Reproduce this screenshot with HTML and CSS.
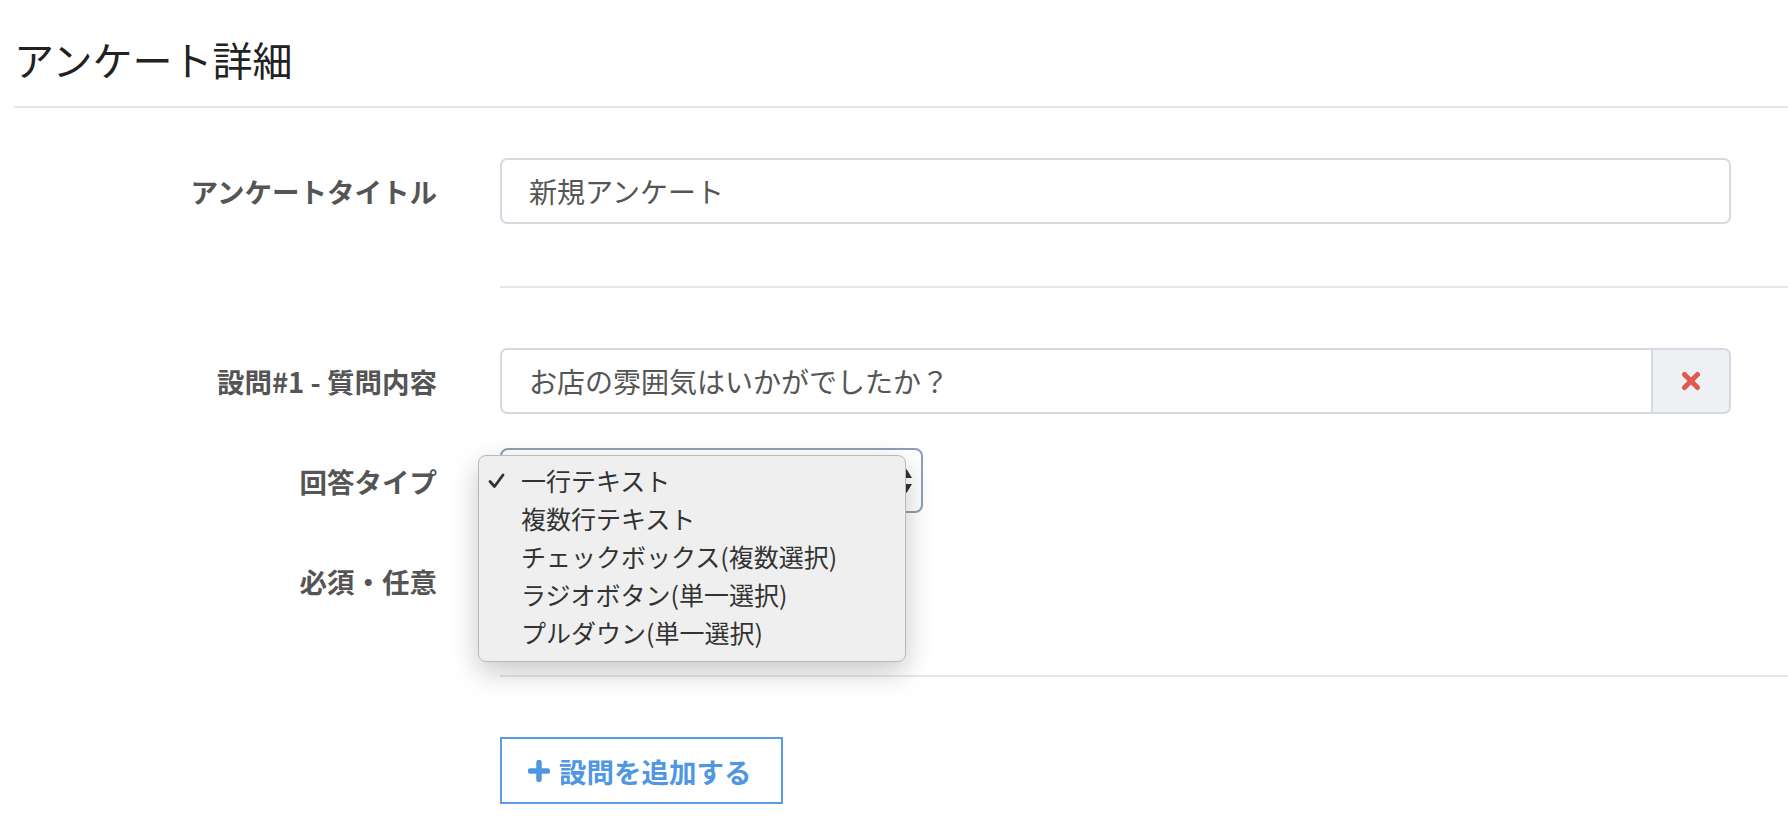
FILE: index.html
```html
<!DOCTYPE html>
<html lang="ja">
<head>
<meta charset="UTF-8">
<meta name="viewport" content="width=device-width, initial-scale=1.0">
<title>アンケート詳細</title>
<link rel="stylesheet" href="styles.css">
</head>
<body>

<div class="page">
    <h2 class="pageTitle">アンケート詳細</h2>
    <hr class="rule">

    <form class="surveyForm">
        <div class="formRow firstRow">
            <label class="rowLabel" for="surveyTitle">アンケートタイトル</label>
            <div class="rowField">
                <input type="text" id="surveyTitle" class="textInput" value="新規アンケート">
            </div>
        </div>

        <div class="ruleRow">
            <div class="labelSpacer"></div>
            <hr class="rule fieldRule">
        </div>

        <div class="formRow questionRow">
            <label class="rowLabel" for="question1">設問#1 - 質問内容</label>
            <div class="rowField">
                <div class="inputGroup">
                    <input type="text" id="question1" class="textInput groupInput" value="お店の雰囲気はいかがでしたか？">
                    <button type="button" class="removeButton" aria-label="削除">
                        <svg width="20" height="20" viewBox="0 0 20 20">
                            <path d="M3.5 3.5 L16.5 16.5 M16.5 3.5 L3.5 16.5" stroke="#e05a4f" stroke-width="5" stroke-linecap="round"/>
                        </svg>
                    </button>
                </div>
            </div>
        </div>

        <div class="formRow typeRow">
            <label class="rowLabel">回答タイプ</label>
            <div class="rowField">
                <div class="selectWrap">
                    <!-- menu is open, so the closed value sits under it -->
                    <div class="selectBox">
                        <span class="selectValue">一行テキスト</span>
                        <svg class="selectArrows" width="13" height="26" viewBox="0 0 13 26">
                            <path d="M6.5 1 L12 10 L1 10 Z" fill="#333"/>
                            <path d="M6.5 25 L12 16 L1 16 Z" fill="#333"/>
                        </svg>
                    </div>

                    <ul class="selectMenu">
                        <li class="menuItem selected">
                            <svg class="checkMark" width="17" height="16" viewBox="0 0 17 16">
                                <path d="M2 8.5 L6.5 13.5 L15 2" fill="none" stroke="#333" stroke-width="2.8" stroke-linecap="round" stroke-linejoin="round"/>
                            </svg>
                            一行テキスト
                        </li>
                        <li class="menuItem">複数行テキスト</li>
                        <li class="menuItem">チェックボックス(複数選択)</li>
                        <li class="menuItem">ラジオボタン(単一選択)</li>
                        <li class="menuItem">プルダウン(単一選択)</li>
                    </ul>
                </div>
            </div>
        </div>

        <div class="formRow requiredRow">
            <label class="rowLabel">必須・任意</label>
            <div class="rowField">
                <div class="radioGroup">
                    <label><input type="radio" name="required1" checked> 必須</label>
                    <label><input type="radio" name="required1"> 任意</label>
                </div>
            </div>
        </div>

        <div class="ruleRow lastRule">
            <div class="labelSpacer"></div>
            <hr class="rule fieldRule">
        </div>

        <div class="buttonRow">
            <div class="labelSpacer"></div>
            <button type="button" class="addButton">
                <svg width="22" height="22" viewBox="0 0 22 22">
                    <path d="M11 2.5 V19.5 M2.5 11 H19.5" stroke="#4f97e0" stroke-width="5.5" stroke-linecap="round"/>
                </svg>
                設問を追加する
            </button>
        </div>
    </form>
</div>

</body>
</html>
```

FILE: styles.css
```css
body {
    margin: 0;
    background-color: #ffffff;
    font-family: "Noto Sans CJK JP", "Noto Sans", sans-serif;
    color: #555555;
}

.page {
    padding-left: 14px;
}

.pageTitle {
    margin: 0;
    padding-top: 36px;
    font-size: 40px;
    line-height: 47px;
    font-weight: 400;
    color: #222222;
}

.rule {
    border: none;
    height: 2px;
    margin: 0;
    background-color: #e4e7eb;
}

.pageTitle + .rule {
    margin-top: 23px;
}

.surveyForm {
    margin-top: 50px;
}

.formRow,
.ruleRow,
.buttonRow {
    display: flex;
    align-items: center;
}

.rowLabel,
.labelSpacer {
    width: 423px;
    flex-shrink: 0;
    margin-right: 63px;
}

.rowLabel {
    text-align: right;
    font-size: 27.5px;
    font-weight: 700;
    color: #555555;
}

.rowField {
    flex: 1;
    padding-right: 57px;
}

.fieldRule {
    flex: 1;
}

.ruleRow {
    margin-top: 62px;
}

.questionRow {
    margin-top: 60px;
}

.typeRow {
    margin-top: 34px;
}

.requiredRow {
    margin-top: 35px;
    height: 65px;
}

.buttonRow {
    margin-top: 60px;
}

.textInput {
    box-sizing: border-box;
    width: 100%;
    height: 66px;
    padding: 0 27px;
    border: 2px solid #d6d9e1;
    border-radius: 7px;
    font-family: inherit;
    font-size: 28px;
    color: #555555;
    background-color: #ffffff;
    outline: none;
}

.inputGroup {
    display: flex;
}

.groupInput {
    flex: 1;
    border-top-right-radius: 0;
    border-bottom-right-radius: 0;
}

.removeButton {
    width: 80px;
    height: 66px;
    border: 2px solid #d6d9e1;
    border-left: 2px solid #d6d9e1;
    border-radius: 0 7px 7px 0;
    margin-left: -2px;
    background-color: #eef0f4;
    display: flex;
    align-items: center;
    justify-content: center;
    padding: 0;
    cursor: pointer;
}

.selectWrap {
    position: relative;
    width: 423px;
}

.selectBox {
    box-sizing: border-box;
    height: 65px;
    border: 2px solid #8f9db8;
    border-radius: 8px;
    display: flex;
    align-items: center;
    justify-content: space-between;
    padding: 0 8px 0 24px;
    font-size: 25px;
    color: #333333;
}

/* hidden while the menu is open on top of it */
.selectValue,
.radioGroup {
    visibility: hidden;
}

.selectMenu {
    position: absolute;
    top: 7px;
    left: -22px;
    width: 428px;
    box-sizing: border-box;
    margin: 0;
    padding: 5px 0 10px;
    list-style: none;
    background-color: #efefef;
    border: 1px solid #b9b9b9;
    border-radius: 8px;
    box-shadow: 0 10px 28px rgba(0, 0, 0, 0.22);
    z-index: 10;
}

.menuItem {
    position: relative;
    height: 38px;
    line-height: 38px;
    padding-left: 42px;
    font-size: 25px;
    color: #333333;
    white-space: nowrap;
}

.checkMark {
    position: absolute;
    left: 9px;
    top: 12px;
}

.radioGroup {
    display: flex;
    gap: 30px;
    font-size: 25px;
}

.addButton {
    display: flex;
    align-items: center;
    gap: 9px;
    height: 67px;
    padding: 0 29px 0 26px;
    border: 2px solid #5a9de0;
    border-radius: 0;
    background-color: #ffffff;
    color: #4f97e0;
    font-family: inherit;
    font-size: 27.5px;
    font-weight: 700;
    cursor: pointer;
}
```
